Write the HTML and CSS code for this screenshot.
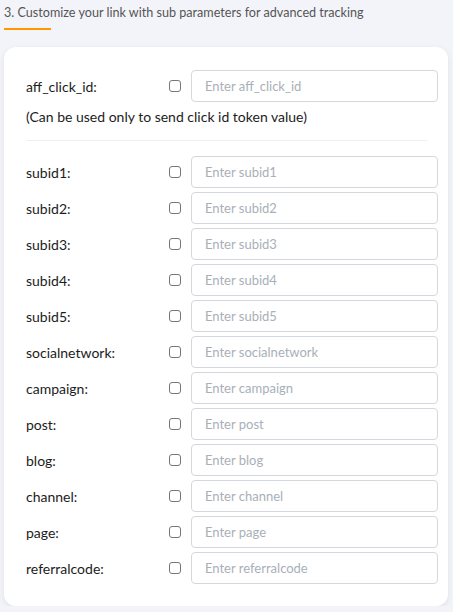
FILE: index.html
```html
<!DOCTYPE html>
<html lang="en">
<head>
    <meta charset="UTF-8">
    <meta name="viewport" content="width=device-width, initial-scale=1.0">
    <title>Sub Parameters</title>
    <link rel="stylesheet" href="styles.css">
</head>
<body>
    <div class="section-title">
        <span>3. Customize your link with sub parameters for advanced tracking</span>
        <div class="title-line"></div>
    </div>

    <div class="card">
        <div class="row">
            <label class="row-label">aff_click_id:</label>
            <input type="checkbox" class="row-check">
            <input type="text" class="row-input" placeholder="Enter aff_click_id">
        </div>
        <p class="note">(Can be used only to send click id token value)</p>
        <hr class="divider">

        <div class="row">
            <label class="row-label">subid1:</label>
            <input type="checkbox" class="row-check">
            <input type="text" class="row-input" placeholder="Enter subid1">
        </div>
        <div class="row">
            <label class="row-label">subid2:</label>
            <input type="checkbox" class="row-check">
            <input type="text" class="row-input" placeholder="Enter subid2">
        </div>
        <div class="row">
            <label class="row-label">subid3:</label>
            <input type="checkbox" class="row-check">
            <input type="text" class="row-input" placeholder="Enter subid3">
        </div>
        <div class="row">
            <label class="row-label">subid4:</label>
            <input type="checkbox" class="row-check">
            <input type="text" class="row-input" placeholder="Enter subid4">
        </div>
        <div class="row">
            <label class="row-label">subid5:</label>
            <input type="checkbox" class="row-check">
            <input type="text" class="row-input" placeholder="Enter subid5">
        </div>
        <div class="row">
            <label class="row-label">socialnetwork:</label>
            <input type="checkbox" class="row-check">
            <input type="text" class="row-input" placeholder="Enter socialnetwork">
        </div>
        <div class="row">
            <label class="row-label">campaign:</label>
            <input type="checkbox" class="row-check">
            <input type="text" class="row-input" placeholder="Enter campaign">
        </div>
        <div class="row">
            <label class="row-label">post:</label>
            <input type="checkbox" class="row-check">
            <input type="text" class="row-input" placeholder="Enter post">
        </div>
        <div class="row">
            <label class="row-label">blog:</label>
            <input type="checkbox" class="row-check">
            <input type="text" class="row-input" placeholder="Enter blog">
        </div>
        <div class="row">
            <label class="row-label">channel:</label>
            <input type="checkbox" class="row-check">
            <input type="text" class="row-input" placeholder="Enter channel">
        </div>
        <div class="row">
            <label class="row-label">page:</label>
            <input type="checkbox" class="row-check">
            <input type="text" class="row-input" placeholder="Enter page">
        </div>
        <div class="row">
            <label class="row-label">referralcode:</label>
            <input type="checkbox" class="row-check">
            <input type="text" class="row-input" placeholder="Enter referralcode">
        </div>
    </div>
</body>
</html>
```

FILE: styles.css
```css
body {
    font-family: Lato, "Open Sans", sans-serif;
    margin: 0;
    padding: 0;
    background-color: #f3f4f9;
    color: #1c1c1c;
}

/* Section heading with orange underline */
.section-title {
    padding: 5px 4px 0 4px;
    font-size: 12.6px;
    color: #555;
}

.title-line {
    width: 47px;
    height: 2px;
    background-color: #ff9800;
    margin-top: 8px;
}

/* White card */
.card {
    margin: 17px 5px 0 4px;
    padding: 23px 10px 22px 22px;
    background-color: #fff;
    border-radius: 12px;
    box-shadow: 0 2px 6px rgba(0, 0, 0, 0.08);
}

.row {
    display: flex;
    align-items: center;
    height: 32px;
    margin-bottom: 4px;
}

.row:last-child {
    margin-bottom: 0;
}

.row-label {
    width: 143px;
    font-size: 14px;
}

.row-check {
    box-sizing: border-box;
    width: 12px;
    height: 12px;
    margin: 0 10px 0 0;
    appearance: none;
    border: 1px solid #777;
    border-radius: 3px;
    background: #fff;
}

.row-input {
    flex: 1;
    height: 32px;
    box-sizing: border-box;
    border: 1px solid #d5d8de;
    border-radius: 4px;
    padding: 0 13px;
    font-family: inherit;
    font-size: 13px;
    color: #333;
}

.row-input::placeholder {
    color: #a9afb8;
}

.note {
    margin: 6px 0 0 0;
    font-size: 14px;
}

.divider {
    border: none;
    border-top: 1px solid #f0f0f3;
    margin: 15px 10px 15px 0;
}
```
